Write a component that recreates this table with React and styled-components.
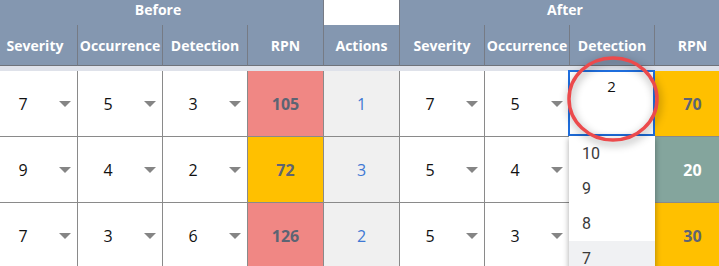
import { Fragment } from 'react'
import { styled, createGlobalStyle } from 'styled-components'

const GlobalStyle = createGlobalStyle`
  html, body { margin: 0; padding: 0; background: #fff; overflow: hidden; }
  body { font-family: "Open Sans", "Noto Sans", sans-serif; }
`;

const Page = styled.div`
  width: 719px;
  height: 266px;
  overflow: hidden;
`;

// the first column is partly scrolled out of view on the left
const Table = styled.div`
  display: grid;
  grid-template-columns: 85px 85px 85px 76px 76px 85px 85px 85px 76px;
  grid-template-rows: 25px 41px 5px 66px 66px 66px;
  width: 738px;
  margin-left: -7px;
`;

const GroupCell = styled.div`
  grid-column: span ${({ $span }) => $span};
  box-sizing: border-box;
  background: ${({ $blank }) => ($blank ? '#fff' : '#8497b0')};
  border-right: 1px solid #767b85;
  color: #fff;
  font-weight: 700;
  font-size: 14px;
  line-height: 20px;
  text-align: center;
`;

const HeadCell = styled.div`
  box-sizing: border-box;
  background: #8497b0;
  border-right: 1px solid #767b85;
  border-bottom: 1px solid #6f737b;
  color: #fff;
  font-weight: 700;
  font-size: 14px;
  display: flex;
  align-items: center;
  justify-content: center;
  white-space: nowrap;
`;

const Strip = styled.div`
  grid-column: 1 / -1;
  background: #dfe2ea;
`;

const Cell = styled.div`
  position: relative;
  box-sizing: border-box;
  border-right: 1px solid #8a8a8a;
  border-bottom: 1px solid #8a8a8a;
  display: flex;
  align-items: center;
  font-size: 16px;
  background: #fff;
`;

const SelectCell = styled(Cell)`
  justify-content: flex-end;
  padding-right: 6px;
  color: #111;
`;

const Value = styled.span`
  width: 20px;
  text-align: center;
  margin-right: 26px;
`;

const Caret = styled.span`
  width: 0;
  height: 0;
  border-left: 6px solid transparent;
  border-right: 6px solid transparent;
  border-top: 6px solid #858585;
`;

const tones = {
  red: { bg: '#f08784', fg: '#5d6473' },
  amber: { bg: '#ffc000', fg: '#5d6473' },
  sage: { bg: '#84a59d', fg: '#ffffff' },
};

const RpnCell = styled(Cell)`
  justify-content: center;
  background: ${({ $tone }) => tones[$tone].bg};
  color: ${({ $tone }) => tones[$tone].fg};
  font-weight: 700;
`;

const ActionCell = styled(Cell)`
  justify-content: center;
  background: #f0f0f0;
  color: #3f78d4;
`;

const EditCell = styled(Cell)`
  z-index: 2;
`;

const EditBox = styled.div`
  position: absolute;
  top: -1px;
  left: -2px;
  right: -1px;
  bottom: 0;
  border: 2px solid #1f6fe0;
  text-align: center;
  padding-top: 4px;
  color: #111;
  font-size: 15px;
  line-height: 20px;
`;

const List = styled.ul`
  position: absolute;
  top: 100%;
  left: -1px;
  width: 86px;
  margin: 0;
  padding: 0;
  list-style: none;
  background: #fff;
  box-shadow: 0 2px 6px rgba(0, 0, 0, 0.35);
  font-family: Roboto, "Noto Sans", sans-serif;
`;

const Option = styled.li`
  height: 35px;
  line-height: 35px;
  padding-left: 13px;
  font-size: 16px;
  color: #3a3a3a;
  background: ${({ $active }) => ($active ? '#f0f1f3' : '#fff')};
`;

const Ring = styled.svg`
  position: absolute;
  left: -7px;
  top: -19px;
  overflow: visible;
  pointer-events: none;
  filter: drop-shadow(1px 3px 4px rgba(0, 0, 0, 0.4));
  z-index: 3;
`;

const Select = ({ value }) => (
  <SelectCell>
    <Value>{value}</Value>
    <Caret />
  </SelectCell>
);

const rows = [
  { before: [7, 5, 3], rpn: [105, 'red'], actions: 1, after: [7, 5, 2], rpnAfter: [70, 'amber'] },
  { before: [9, 4, 2], rpn: [72, 'amber'], actions: 3, after: [5, 4, null], rpnAfter: [20, 'sage'] },
  { before: [7, 3, 6], rpn: [126, 'red'], actions: 2, after: [5, 3, null], rpnAfter: [30, 'amber'] },
];

const heads = ['Severity', 'Occurrence', 'Detection', 'RPN', 'Actions', 'Severity', 'Occurrence', 'Detection', 'RPN'];

const App = () => {
  return (
    <Page>
      <GlobalStyle />
      <Table>
        <GroupCell $span={4}>Before</GroupCell>
        <GroupCell $span={1} $blank />
        <GroupCell $span={4}>After</GroupCell>

        {heads.map((h, i) => (
          <HeadCell key={i}>{h}</HeadCell>
        ))}

        <Strip />

        {rows.map((r, i) => (
          <Fragment key={i}>
            {r.before.map((v, j) => (
              <Select key={j} value={v} />
            ))}
            <RpnCell $tone={r.rpn[1]}>{r.rpn[0]}</RpnCell>
            <ActionCell>{r.actions}</ActionCell>
            <Select value={r.after[0]} />
            <Select value={r.after[1]} />
            {i === 0 ? (
              <EditCell>
                <EditBox>{r.after[2]}</EditBox>
                <List>
                  <Option>10</Option>
                  <Option>9</Option>
                  <Option>8</Option>
                  <Option $active>7</Option>
                </List>
                <Ring width="100" height="94" viewBox="0 0 100 94">
                  <ellipse cx="50" cy="47" rx="44" ry="41" fill="none" stroke="#ec4a4c" strokeWidth="3.5" />
                </Ring>
              </EditCell>
            ) : (
              <Cell />
            )}
            <RpnCell $tone={r.rpnAfter[1]}>{r.rpnAfter[0]}</RpnCell>
          </Fragment>
        ))}
      </Table>
    </Page>
  )
}

export default App
